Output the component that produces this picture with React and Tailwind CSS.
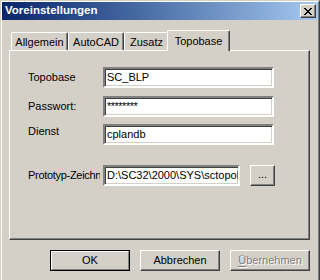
import React from 'react';

const raised = 'border border-t-white border-l-white border-r-[#404040] border-b-[#404040] shadow-[inset_-1px_-1px_#808080]';
const sunken = 'border-2 border-t-[#808080] border-l-[#808080] border-r-white border-b-white shadow-[inset_1px_1px_#404040,inset_-1px_-1px_#d4d0c8]';

function CloseGlyph() {
    // kleines fettes X wie im Windows-2000-Titelbalken
    const rows = [0, 1, 2, 3, 4, 5, 6];
    return (
        <svg width="8" height="7" viewBox="0 0 8 7" shapeRendering="crispEdges">
            {rows.map((i) => (
                <g key={i} fill="#000">
                    <rect x={i} y={i} width="2" height="1" />
                    <rect x={6 - i} y={i} width="2" height="1" />
                </g>
            ))}
        </svg>
    );
}

function Tab({ label, width, active }) {
    if (active) {
        return (
            <div
                className={`relative z-10 -mx-[2px] -mb-[1px] h-[21px] bg-[#d4d0c8] border-l border-t border-r border-t-white border-l-white border-r-[#404040] shadow-[inset_-1px_0_#808080] rounded-t-[2px] flex items-center justify-center ${width}`}
            >
                {label}
            </div>
        );
    }
    return (
        <div
            className={`h-[18px] border-l border-t border-r border-t-white border-l-white border-r-[#404040] shadow-[inset_-1px_0_#808080] rounded-t-[2px] flex items-center justify-center pt-[1px] ${width}`}
        >
            {label}
        </div>
    );
}

function Field({ label, value, labelClass = '' }) {
    return (
        <div className="flex items-center">
            <span className={`w-[72px] mr-[3px] overflow-hidden whitespace-nowrap ${labelClass}`}>{label}</span>
            <div className={`w-[171px] h-[21px] bg-white ${sunken} flex items-center pl-[2px]`}>{value}</div>
        </div>
    );
}

export default function App() {
    return (
        <div className="w-[320px] h-[280px] overflow-hidden bg-[#d4d0c8] text-[11px] leading-none text-black font-['Liberation_Sans',Arial,sans-serif]">
            {/* Fensterrahmen */}
            <div className="h-[290px] border-t border-l border-r border-t-[#d4d0c8] border-l-[#d4d0c8] border-r-[#404040]">
                <div className="h-full border-t border-l border-r border-t-white border-l-white border-r-[#808080]">
                    {/* Titelbalken */}
                    <div className="h-[18px] bg-gradient-to-r from-[#0a246a] to-[#a6caf0] flex items-center justify-between pl-[3px] pr-[2px]">
                        <span className="text-white font-bold text-[11.5px]">Voreinstellungen</span>
                        <button className={`w-[16px] h-[14px] bg-[#d4d0c8] ${raised} flex items-center justify-center`}>
                            <CloseGlyph />
                        </button>
                    </div>

                    {/* Registerkarten */}
                    <div className="pl-[7px] pt-[10px]">
                        <div className="flex items-end h-[20px] pl-[2px]">
                            <Tab label="Allgemein" width="w-[57px]" />
                            <Tab label="AutoCAD" width="w-[56px]" />
                            <Tab label="Zusatz" width="w-[45px]" />
                            <Tab label="Topobase" width="w-[63px]" active />
                        </div>

                        <div className="w-[301px] h-[190px] border border-t-white border-l-white border-r-[#404040] border-b-[#404040] shadow-[inset_-1px_-1px_#808080] pl-[18px] pt-[16px]">
                            <Field label="Topobase" value="SC_BLP" />
                            <div className="mt-[8px]">
                                <Field label="Passwort:" value={<span className="tracking-[-0.5px]">********</span>} />
                            </div>
                            <div className="mt-[7px]">
                                <Field label="Dienst" value="cplandb" labelClass="mb-[6px]" />
                            </div>
                            <div className="mt-[20px] flex items-center">
                                <span className="w-[72px] mr-[3px] overflow-hidden whitespace-nowrap tracking-[-0.3px]">Prototyp-Zeichnung</span>
                                <div className={`w-[137px] h-[21px] bg-white ${sunken} flex items-center pl-[2px] overflow-hidden whitespace-nowrap`}>
                                    D:\SC32\2000\SYS\sctopobase.dwg
                                </div>
                                <button className={`ml-[10px] w-[25px] h-[21px] bg-[#d4d0c8] ${raised} flex items-center justify-center pb-[2px]`}>
                                    ...
                                </button>
                            </div>
                        </div>

                        {/* Schaltflächen */}
                        <div className="flex gap-[10px] pl-[41px] pt-[10px]">
                            <button className="w-[80px] h-[21px] border border-black">
                                <div className="w-full h-full border border-t-white border-l-white border-r-[#808080] border-b-[#808080] flex items-center justify-center">
                                    OK
                                </div>
                            </button>
                            <button className={`w-[80px] h-[21px] ${raised} flex items-center justify-center`}>
                                Abbrechen
                            </button>
                            <button className={`w-[80px] h-[21px] ${raised} flex items-center justify-center text-[#808080] [text-shadow:1px_1px_0_#ffffff]`}>
                                <span className="underline underline-offset-2">Ü</span>bernehmen
                            </button>
                        </div>
                    </div>
                </div>
            </div>
        </div>
    );
}
